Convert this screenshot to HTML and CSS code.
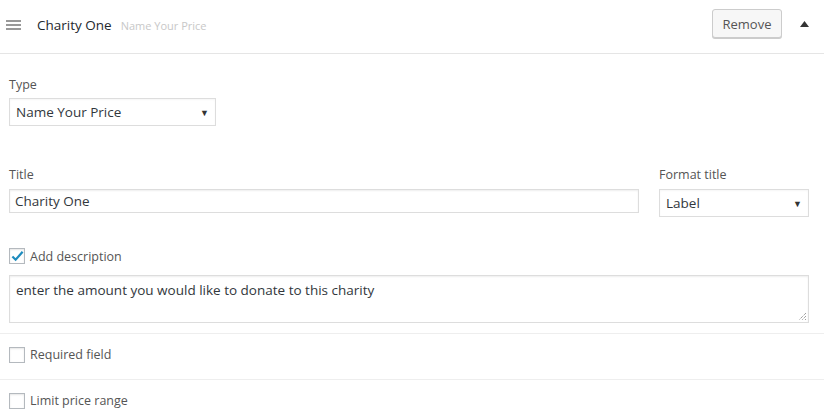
FILE: index.html
```html
<!DOCTYPE html>
<html>
<head>
<meta charset="utf-8">
<link rel="stylesheet" href="styles.css">
</head>
<body>
<div class="panel">
  <div class="header">
    <span class="handle">
      <svg width="15" height="10" viewBox="0 0 15 10"><rect x="0" y="0" width="15" height="2" fill="#999"/><rect x="0" y="4" width="15" height="2" fill="#999"/><rect x="0" y="8" width="15" height="2" fill="#999"/></svg>
    </span>
    <span class="title">Charity One</span>
    <span class="subtitle">Name Your Price</span>
    <span class="spacer"></span>
    <button class="btn">Remove</button>
    <span class="toggle">
      <svg width="9" height="6" viewBox="0 0 9 6"><polygon points="0,6 9,6 4.5,0" fill="#333"/></svg>
    </span>
  </div>
  <div class="body">
    <div class="field type-field">
      <label class="lbl">Type</label>
      <div class="select type-select"><span>Name Your Price</span><span class="caret">▼</span></div>
    </div>
    <div class="row title-row">
      <div class="field grow">
        <label class="lbl">Title</label>
        <div class="input">Charity One</div>
      </div>
      <div class="field format-field">
        <label class="lbl">Format title</label>
        <div class="select format-select"><span>Label</span><span class="caret">▼</span></div>
      </div>
    </div>
    <div class="check-row desc-check">
      <span class="cb checked">
        <svg width="14" height="12" viewBox="0 0 14 12"><path d="M1.5 6.5 L5 10 L12.5 1.5" fill="none" stroke="#1e8cbe" stroke-width="2.4"/></svg>
      </span>
      <span class="cb-label">Add description</span>
    </div>
    <div class="textarea">enter the amount you would like to donate to this charity
      <svg class="grip" width="9" height="9" viewBox="0 0 9 9"><path d="M8 1 L1 8 M8 4 L4 8 M8 7 L7 8" stroke="#777" stroke-width="1" stroke-dasharray="1 1"/></svg>
    </div>
  </div>
  <div class="opt-row">
    <span class="cb"></span>
    <span class="cb-label">Required field</span>
  </div>
  <div class="opt-row">
    <span class="cb"></span>
    <span class="cb-label">Limit price range</span>
  </div>
</div>
</body>
</html>
```
FILE: styles.css
```css
* { box-sizing: border-box; }
html, body { margin: 0; padding: 0; background: #fff; }
body { font-family: "Open Sans", "Noto Sans", sans-serif; color: #32373c; }
.panel { width: 824px; }
.header {
  display: flex;
  align-items: center;
  height: 54px;
  border-bottom: 1px solid #e5e5e5;
  padding: 0 0 4px 6px;
}
.handle { display: flex; width: 15px; height: 10px; }
.title { margin-left: 16px; font-size: 13.5px; color: #23282d; }
.subtitle { margin-left: 9px; font-size: 11px; color: #c8c8c8; margin-top: 1px; }
.spacer { flex: 1; }
.btn {
  font-family: inherit;
  width: 70px;
  height: 29px;
  background: #f7f7f7;
  border: 1px solid #ccc;
  border-radius: 3px;
  box-shadow: 0 1px 0 #ccc;
  color: #555;
  font-size: 13px;
  padding: 0;
  margin-top: -2px;
}
.toggle { display: flex; width: 9px; margin: -2px 15px 0 18px; }
.body { padding: 22px 15px 10px 9px; border-bottom: 1px solid #eee; }
.field { display: flex; flex-direction: column; }
.lbl { font-size: 12.5px; line-height: 18px; color: #555; margin-bottom: 4px; }
.type-field { width: 207px; }
.select {
  display: flex;
  justify-content: space-between;
  align-items: center;
  height: 28px;
  border: 1px solid #ddd;
  box-shadow: inset 0 1px 2px rgba(0,0,0,.04);
  padding: 0 6px 0 6px;
  font-size: 13.5px;
  color: #32373c;
}
.caret { font-size: 9px; color: #333; }
.row { display: flex; gap: 20px; margin-top: 40px; }
.grow { flex: 1; }
.title-row .lbl { margin-bottom: 5px; }
.input {
  height: 24px;
  border: 1px solid #ddd;
  box-shadow: inset 0 1px 2px rgba(0,0,0,.07);
  padding: 0 5px;
  font-size: 13.5px;
  line-height: 22px;
  color: #32373c;
}
.format-field { width: 150px; }
.check-row { display: flex; align-items: center; margin-top: 31px; height: 16px; }
.cb {
  width: 16px;
  height: 16px;
  border: 1px solid #b4b9be;
  box-shadow: inset 0 1px 2px rgba(0,0,0,.1);
  background: #fff;
  display: flex;
  align-items: center;
  justify-content: center;
  flex: none;
}
.cb svg { margin-left: 1px; }
.cb-label { margin-left: 5px; font-size: 12.5px; color: #555; }
.textarea {
  position: relative;
  margin-top: 11px;
  height: 48px;
  border: 1px solid #ddd;
  box-shadow: inset 0 1px 2px rgba(0,0,0,.07);
  padding: 4px 6px;
  font-size: 13.5px;
  line-height: 20px;
  color: #32373c;
}
.grip { position: absolute; right: 1px; bottom: 1px; }
.opt-row {
  display: flex;
  align-items: center;
  padding: 12px 9px 16px;
  border-bottom: 1px solid #eee;
}
.opt-row:last-child { border-bottom: none; }
```
